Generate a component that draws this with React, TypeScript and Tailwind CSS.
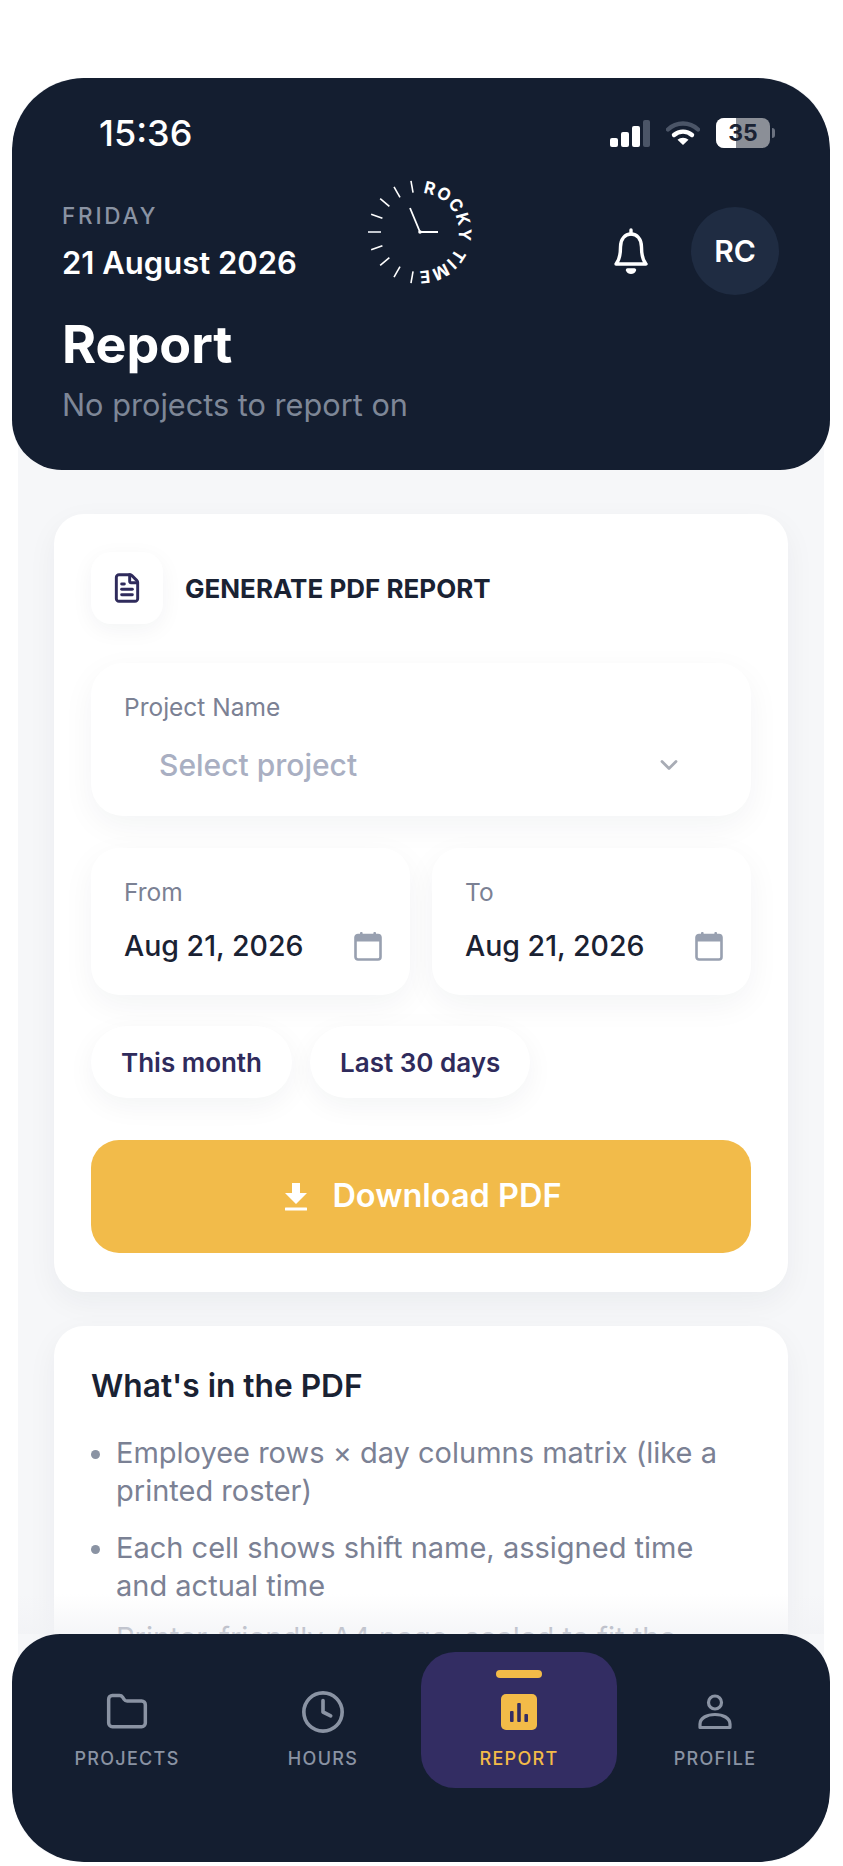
import React from 'react';
import { ChevronDown, Clock, FileText, Folder } from 'lucide-react';

const poppins = '[font-family:Inter,"Noto_Sans",sans-serif]';

function RockyLogo() {
  const ticks = [10, 30, 50, 70, 90, 110, 130, 150, 170];
  return (
    <svg width="110" height="110" viewBox="-55 -55 110 110" className="shrink-0">
      <defs>
        <path id="logo-ring" d="M 0 -39 A 39 39 0 1 1 -0.01 -39" />
      </defs>
      {ticks.map((t) => (
        <line
          key={t}
          x1="0"
          y1={t === 90 ? -39 : -40}
          x2="0"
          y2="-52"
          stroke={t === 90 ? '#c3c7ce' : '#ffffff'}
          strokeWidth={t === 90 ? 2 : 1.6}
          transform={`rotate(${-t})`}
        />
      ))}
      <line x1="0" y1="0" x2="-10" y2="-24" stroke="#fff" strokeWidth="1.8" />
      <line x1="0" y1="0" x2="18" y2="0" stroke="#fff" strokeWidth="1.8" />
      <circle cx="0" cy="0" r="1.8" fill="#fff" />
      <text fill="#fff" fontSize="17" fontWeight="700" fontFamily="Inter, sans-serif" letterSpacing="1.2">
        <textPath href="#logo-ring" startOffset="3">
          ROCKY
        </textPath>
      </text>
      <text fill="#fff" fontSize="17" fontWeight="700" fontFamily="Inter, sans-serif" letterSpacing="1.2">
        <textPath href="#logo-ring" startOffset="77">
          TIME
        </textPath>
      </text>
    </svg>
  );
}

function StatusIcons() {
  return (
    <div className="flex items-center">
      <div className="flex items-end gap-[3px]">
        <span className="h-[9px] w-[8px] rounded-[2px] bg-white" />
        <span className="h-[15px] w-[8px] rounded-[2px] bg-white" />
        <span className="h-[21px] w-[8px] rounded-[2px] bg-white" />
        <span className="h-[27px] w-[7px] rounded-[2px] bg-[#4b5567]" />
      </div>
      <svg width="34" height="26" viewBox="0 0 34 26" fill="none" className="ml-[16px]">
        <path d="M2 9.5 C 10.5 1.5, 23.5 1.5, 32 9.5" stroke="#4b5567" strokeWidth="4.4" strokeLinecap="round" />
        <path d="M8 15 C 13 10.5, 21 10.5, 26 15" stroke="#fff" strokeWidth="4.4" strokeLinecap="round" />
        <path d="M17 25 L11.5 19.8 C 14.5 17, 19.5 17, 22.5 19.8 Z" fill="#fff" />
      </svg>
      <div className="ml-[16px] flex items-center gap-[2px]">
        <div className="relative flex h-[30px] w-[54px] items-center justify-center overflow-hidden rounded-[8px] bg-[#8b8f97]">
          <span className="absolute inset-y-0 left-0 w-[20px] bg-white" />
          <span className="relative text-[23px] font-bold leading-none text-[#1a2233]">35</span>
        </div>
        <span className="h-[10px] w-[3px] rounded-r-full bg-[#6b7280]" />
      </div>
    </div>
  );
}

function BellIcon() {
  return (
    <svg width="36" height="48" viewBox="0 0 36 48" fill="none" stroke="#fff" strokeWidth="3.4" strokeLinejoin="round" strokeLinecap="round">
      <path d="M18 3 V7" />
      <path d="M3 37 C 6.5 33 7.5 29 7.5 20 C 7.5 12 12 7 18 7 C 24 7 28.5 12 28.5 20 C 28.5 29 29.5 33 33 37 Z" />
      <path d="M14.5 43 C 16 46 20 46 21.5 43 Z" fill="#fff" />
    </svg>
  );
}

function CalendarIcon() {
  return (
    <svg width="28" height="30" viewBox="0 0 28 30" className="shrink-0">
      <rect x="1.5" y="4" width="25" height="24.5" rx="2.5" fill="none" stroke="#98a0b0" strokeWidth="2.6" />
      <path d="M1.5 6.5 a2.5 2.5 0 0 1 2.5 -2.5 h20 a2.5 2.5 0 0 1 2.5 2.5 v4 h-25 z" fill="#98a0b0" />
      <rect x="6" y="1" width="2.6" height="5" rx="1" fill="#98a0b0" />
      <rect x="19.4" y="1" width="2.6" height="5" rx="1" fill="#98a0b0" />
    </svg>
  );
}

function DownloadIcon() {
  return (
    <svg width="24" height="28" viewBox="0 0 24 28" fill="#fff" className="shrink-0">
      <path d="M8 0 H16 V10 H23 L12 21 L1 10 H8 Z" />
      <rect x="1" y="24.5" width="22" height="3" rx="0.5" />
    </svg>
  );
}

function DateField({ label, value }: { label: string; value: string }) {
  return (
    <div className="flex h-[147px] flex-col rounded-[28px] bg-white pl-[33px] pr-[28px] pt-[28px] shadow-[0_10px_32px_rgba(25,35,60,0.05)]">
      <span className="text-[24.5px] leading-[32px] text-[#7b8194]">{label}</span>
      <div className="mt-[19px] flex items-center justify-between">
        <span className="text-[28.5px] font-medium leading-[38px] text-[#1a2233]">{value}</span>
        <CalendarIcon />
      </div>
    </div>
  );
}

function QuickRange({ label }: { label: string }) {
  return (
    <button className="flex h-[72px] items-center rounded-full bg-white px-[30px] text-[26px] font-semibold text-[#2f2b5c] shadow-[0_8px_28px_rgba(25,35,60,0.05)]">
      {label}
    </button>
  );
}

function NavItem({ label, icon, active }: { label: string; icon: React.ReactNode; active?: boolean }) {
  return (
    <div className={`relative flex h-[136px] flex-col items-center rounded-[34px] pt-[39px] ${active ? 'bg-[#332d63]' : ''}`}>
      {active && <span className="absolute left-1/2 top-[18px] h-[8px] w-[46px] -translate-x-1/2 rounded-full bg-[#f3bb48]" />}
      <div className="flex h-[42px] items-center justify-center">{icon}</div>
      <span className={`mt-[14px] text-[18px] font-medium leading-[24px] tracking-[1.3px] ${active ? 'text-[#f3bb48]' : 'text-[#8a93a3]'}`}>
        {label}
      </span>
    </div>
  );
}

function ProfileIcon() {
  return (
    <svg width="34" height="36" viewBox="0 0 34 36" fill="none" stroke="#8a93a3" strokeWidth="3.2">
      <circle cx="17" cy="8.5" r="6.5" />
      <path d="M2 33.5 H32 V30 C32 24 25 20.5 17 20.5 C9 20.5 2 24 2 30 Z" strokeLinejoin="round" />
    </svg>
  );
}

function ReportIcon() {
  return (
    <svg width="36" height="36" viewBox="0 0 36 36">
      <rect width="36" height="36" rx="5" fill="#f3bb48" />
      <rect x="9" y="17" width="3.6" height="11" rx="1" fill="#332d63" />
      <rect x="16.2" y="9" width="3.6" height="19" rx="1" fill="#332d63" />
      <rect x="23.4" y="20" width="3.6" height="8" rx="1" fill="#332d63" />
    </svg>
  );
}

export default function App() {
  return (
    <div className={`h-[1866px] overflow-hidden bg-white pt-[78px] ${poppins}`}>
      <div className="relative ml-[12px] mr-[13px] h-[1784px] overflow-hidden rounded-[70px]">
        <div className="mx-[6px] h-full bg-[#f6f7f9]">
          <div className="px-[36px] pt-[436px]">
            <section className="rounded-[30px] bg-white px-[37px] pb-[39px] pt-[38px] shadow-[0_10px_30px_rgba(25,35,60,0.05)]">
              <div className="flex items-center gap-[22px]">
                <div className="flex h-[72px] w-[72px] items-center justify-center rounded-[20px] bg-white shadow-[0_6px_22px_rgba(25,35,60,0.05)]">
                  <FileText size={32} strokeWidth={2.2} color="#2f2b5c" />
                </div>
                <h2 className="text-[26px] font-bold text-[#1a2233]">GENERATE PDF REPORT</h2>
              </div>

              <div className="mt-[39px] h-[153px] rounded-[32px] bg-white pl-[33px] pr-[68px] pt-[28px] shadow-[0_10px_32px_rgba(25,35,60,0.05)]">
                <div className="text-[24.5px] leading-[32px] text-[#7b8194]">Project Name</div>
                <div className="mt-[23px] flex items-center justify-between pl-[35px]">
                  <span className="text-[30px] font-medium leading-[38px] text-[#a9afc2]">Select project</span>
                  <ChevronDown size={28} strokeWidth={2.4} color="#a8acb5" />
                </div>
              </div>

              <div className="mt-[32px] grid grid-cols-2 gap-[22px]">
                <DateField label="From" value="Aug 21, 2026" />
                <DateField label="To" value="Aug 21, 2026" />
              </div>

              <div className="mt-[31px] flex gap-[18px]">
                <QuickRange label="This month" />
                <QuickRange label="Last 30 days" />
              </div>

              <button className="mt-[42px] flex h-[113px] w-full items-center justify-center gap-[24px] rounded-[28px] bg-[#f2bb4a] pl-[4px] text-[32.5px] font-semibold text-white">
                <DownloadIcon />
                Download PDF
              </button>
            </section>

            <section className="mt-[34px] rounded-[30px] bg-white px-[37px] pt-[39px] shadow-[0_10px_30px_rgba(25,35,60,0.05)]">
              <h3 className="text-[31.7px] font-semibold leading-[42px] text-[#1a2233]">What's in the PDF</h3>
              <ul className="mt-[27px] flex list-disc flex-col gap-[19px] pb-[80px] pl-[25px] pr-[20px] text-[29px] leading-[38px] text-[#7b8194] marker:text-[#8a93a3]">
                <li>Employee rows × day columns matrix (like a printed roster)</li>
                <li>Each cell shows shift name, assigned time and actual time</li>
                <li className="-mt-[5px]">Printer-friendly A4 page, scaled to fit the period</li>
              </ul>
            </section>
          </div>
        </div>

        <header className="absolute inset-x-0 top-0 h-[392px] rounded-b-[50px] rounded-t-[72px] bg-[#141e30] pl-[50px] pr-[51px] pt-[32px]">
          <div className="flex items-center justify-between pl-[37px] pr-[4px]">
            <span className="text-[36px] font-medium leading-[46px] text-white">15:36</span>
            <StatusIcons />
          </div>
          <div className="mt-[21px] flex items-start">
            <div className="w-[303px] shrink-0 pt-[25px]">
              <div className="text-[22.5px] font-medium leading-[28px] tracking-[2.8px] text-[#8a93a3]">FRIDAY</div>
              <div className="mt-[13px] text-[31px] font-semibold leading-[40px] text-white">21 August 2026</div>
            </div>
            <RockyLogo />
            <div className="ml-auto flex items-center gap-[42px] pt-[30px]">
              <BellIcon />
              <div className="flex h-[88px] w-[88px] items-center justify-center rounded-full bg-[#1f2c42] text-[30px] font-semibold text-white">RC</div>
            </div>
          </div>
          <h1 className="mt-[19px] text-[52px] font-bold leading-[62px] text-white">Report</h1>
          <p className="mt-[9px] text-[30.7px] leading-[40px] text-[#7e8797]">No projects to report on</p>
        </header>

        <div className="absolute inset-x-[6px] bottom-[228px] h-[40px] bg-gradient-to-b from-transparent to-[#f1f2f5]/70" />

        <nav className="absolute inset-x-0 bottom-0 grid h-[228px] grid-cols-4 rounded-b-[72px] rounded-t-[48px] bg-[#141e30] px-[17px] pt-[18px]">
          <NavItem label="PROJECTS" icon={<Folder size={44} strokeWidth={1.9} color="#8a93a3" />} />
          <NavItem label="HOURS" icon={<Clock size={46} strokeWidth={1.9} color="#8a93a3" />} />
          <NavItem label="REPORT" icon={<ReportIcon />} active />
          <NavItem label="PROFILE" icon={<ProfileIcon />} />
        </nav>
      </div>
    </div>
  );
}
